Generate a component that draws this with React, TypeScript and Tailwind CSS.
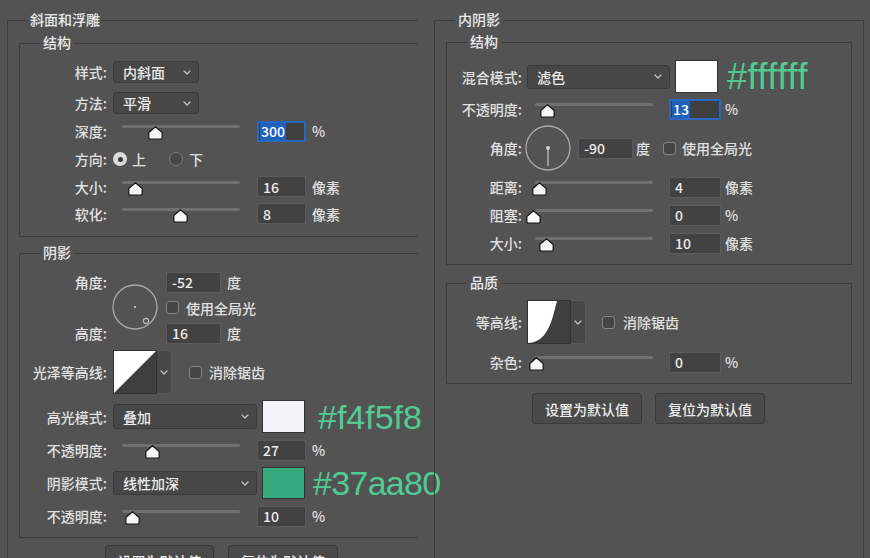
import React from "react";

function Chevron() {
  return (
    <svg width="8" height="5" viewBox="0 0 8 5" className="shrink-0">
      <path d="M1 1 L4 4 L7 1" fill="none" stroke="#c4c4c4" strokeWidth="1.2" strokeLinecap="round" strokeLinejoin="round" />
    </svg>
  );
}

function Thumb() {
  return (
    <svg width="15" height="14" viewBox="0 0 15 14">
      <path
        d="M7.5 0.8 L14.2 6.6 V11.6 Q14.2 13.2 12.6 13.2 H2.4 Q0.8 13.2 0.8 11.6 V6.6 Z"
        fill="#f7f7f7"
        stroke="#1c1c1c"
        strokeWidth="1.3"
        strokeLinejoin="round"
      />
    </svg>
  );
}

function Slider({ pos, cls }: { pos: number; cls: string }) {
  return (
    <div className={`relative h-[20px] w-[118px] shrink-0 ${cls}`}>
      <div className="absolute left-0 right-0 top-[4px] h-[3px] rounded-full bg-[#707070]" />
      <div className="absolute top-[5px] flex" style={{ left: pos - 7 }}>
        <Thumb />
      </div>
    </div>
  );
}

function Field({ value, cls, selected }: { value: string; cls: string; selected?: boolean }) {
  if (selected) {
    return (
      <div className={`flex h-[21px] shrink-0 items-center border-2 border-[#2a68bf] bg-[#3f3f3f] pl-[1px] ${cls}`}>
        <span className="bg-[#1f60bb] px-[1px] leading-[17px] text-white">{value}</span>
      </div>
    );
  }
  return (
    <div className={`flex h-[21px] shrink-0 items-center border border-[#5b5b5b] bg-[#424242] pl-[5px] text-[#ececec] ${cls}`}>
      {value}
    </div>
  );
}

function Dropdown({ text, cls }: { text: string; cls: string }) {
  return (
    <div className={`flex shrink-0 items-center justify-between rounded-[3px] border border-[#3a3a3a] bg-[#474747] pl-[9px] pr-[7px] text-[#ececec] ${cls}`}>
      <span>{text}</span>
      <Chevron />
    </div>
  );
}

function Legend({ children, cls }: { children: React.ReactNode; cls: string }) {
  return <div className={`-mt-[11px] h-[18px] w-fit bg-[#535353] px-[3px] text-[#eaeaea] ${cls}`}>{children}</div>;
}

function Label({ t, cls }: { t: string; cls: string }) {
  return <div className={`shrink-0 whitespace-nowrap text-right ${cls}`}>{t}</div>;
}

function Checkbox({ cls }: { cls: string }) {
  return <div className={`h-[13px] w-[13px] shrink-0 rounded-[3px] border-[1.5px] border-[#858585] bg-[#454545] ${cls}`} />;
}

function Contour({ kind, cls }: { kind: "linear" | "s"; cls: string }) {
  return (
    <div className={`flex shrink-0 ${cls}`}>
      <div className="h-[44px] w-[44px] border border-[#333]">
        <svg width="42" height="42" viewBox="0 0 42 42" className="block">
          <rect x="0" y="0" width="42" height="42" fill="#3f3f3f" />
          {kind === "linear" ? (
            <polygon points="0,0 42,0 0,42" fill="#ffffff" />
          ) : (
            <path d="M0 0 H29 C25 14 22 36 6 41 Q2 42 0 42 Z" fill="#ffffff" />
          )}
        </svg>
      </div>
      <div className="flex h-[44px] w-[15px] items-center justify-center rounded-r-[3px] border-y border-r border-[#5a5a5a] bg-[#474747]">
        <Chevron />
      </div>
    </div>
  );
}

function Btn({ t, cls }: { t: string; cls: string }) {
  return (
    <div className={`flex h-[31px] shrink-0 items-center justify-center rounded-[3px] border border-[#3a3a3a] bg-[#4a4a4a] text-[14px] text-[#ececec] ${cls}`}>
      {t}
    </div>
  );
}

function LeftSliderRow({ label, pos, value, unit, cls, selected }: { label: string; pos: number; value: string; unit: string; cls: string; selected?: boolean }) {
  return (
    <div className={`flex items-center ${cls}`}>
      <Label t={label} cls="w-[87px]" />
      <Slider pos={pos} cls="ml-[15px]" />
      <Field value={value} cls="ml-[17px] w-[49px]" selected={selected} />
      <span className="ml-[6px]">{unit}</span>
    </div>
  );
}

function RightSliderRow({ label, pos, value, unit, cls, selected }: { label: string; pos: number; value: string; unit: string; cls: string; selected?: boolean }) {
  return (
    <div className={`flex items-center ${cls}`}>
      <Label t={label} cls="w-[75px]" />
      <Slider pos={pos} cls="ml-[13px]" />
      <Field value={value} cls="ml-[16px] w-[52px]" selected={selected} />
      <span className="ml-[4px]">{unit}</span>
    </div>
  );
}

export default function App() {
  return (
    <div className="flex h-[558px] w-[870px] overflow-hidden bg-[#535353] font-['Noto_Sans_CJK_SC',sans-serif] text-[14px] font-medium leading-[18px] text-[#e0e0e0]">
      {/* Left panel */}
      <div className="ml-[7px] mt-[20px] w-[411px] shrink-0 border-l border-t border-[#3d3d3d]">
        <Legend cls="ml-[19px]">斜面和浮雕</Legend>

        {/* 结构 */}
        <div className="ml-[11px] mt-[15px] border-b border-l border-t border-[#3d3d3d] pb-[9px]">
          <Legend cls="ml-[20px]">结构</Legend>
          <div className="mt-[7px] flex h-[28px] items-center">
            <Label t="样式:" cls="w-[87px]" />
            <Dropdown text="内斜面" cls="ml-[6px] h-[22px] w-[86px]" />
          </div>
          <div className="mt-[3px] flex h-[28px] items-center">
            <Label t="方法:" cls="w-[87px]" />
            <Dropdown text="平滑" cls="ml-[6px] h-[22px] w-[86px]" />
          </div>
          <LeftSliderRow label="深度:" pos={33} value="300" unit="%" cls="h-[28px]" selected />
          <div className="flex h-[28px] items-center">
            <Label t="方向:" cls="w-[87px]" />
            <div className="ml-[6px] flex h-[14px] w-[14px] shrink-0 items-center justify-center rounded-full bg-[#dadada]">
              <div className="h-[5px] w-[5px] rounded-full bg-[#3a3a3a]" />
            </div>
            <span className="ml-[5px]">上</span>
            <div className="ml-[23px] h-[14px] w-[14px] shrink-0 rounded-full border border-[#7a7a7a] bg-[#474747]" />
            <span className="ml-[6px]">下</span>
          </div>
          <LeftSliderRow label="大小:" pos={13} value="16" unit="像素" cls="h-[27px]" />
          <LeftSliderRow label="软化:" pos={58} value="8" unit="像素" cls="h-[27px]" />
        </div>

        {/* 阴影 */}
        <div className="ml-[11px] mt-[16px] border-b border-l border-t border-[#3d3d3d] pb-[8px]">
          <Legend cls="ml-[20px]">阴影</Legend>
          <div className="mt-[8px] flex">
            <div className="flex w-[87px] shrink-0 flex-col">
              <div className="flex h-[26px] items-center justify-end">角度:</div>
              <div className="h-[25px]" />
              <div className="flex h-[26px] items-center justify-end">高度:</div>
            </div>
            <svg width="46" height="46" viewBox="0 0 46 46" className="ml-[5px] mt-[15px] shrink-0">
              <circle cx="23" cy="23" r="22" fill="none" stroke="#a9a9a9" strokeWidth="1.3" />
              <circle cx="23" cy="23" r="1.1" fill="#cfcfcf" />
              <circle cx="34" cy="37" r="2.6" fill="none" stroke="#bdbdbd" strokeWidth="1.1" />
            </svg>
            <div className="ml-[8px] flex flex-col">
              <div className="flex h-[26px] items-center">
                <Field value="-52" cls="w-[55px]" />
                <span className="ml-[6px]">度</span>
              </div>
              <div className="flex h-[25px] items-center">
                <Checkbox cls="" />
                <span className="ml-[7px]">使用全局光</span>
              </div>
              <div className="flex h-[26px] items-center">
                <Field value="16" cls="w-[55px]" />
                <span className="ml-[6px]">度</span>
              </div>
            </div>
          </div>
          <div className="mt-[4px] flex h-[44px] items-center">
            <Label t="光泽等高线:" cls="w-[87px]" />
            <Contour kind="linear" cls="ml-[6px]" />
            <Checkbox cls="ml-[17px]" />
            <span className="ml-[7px]">消除锯齿</span>
          </div>
          <div className="mt-[6px] flex h-[33px] items-center">
            <Label t="高光模式:" cls="w-[87px]" />
            <Dropdown text="叠加" cls="ml-[6px] h-[25px] w-[144px]" />
            <div className="ml-[5px] h-[33px] w-[43px] shrink-0 border border-[#333] bg-[#f4f5f8]" />
            <span className="ml-[13px] font-['Liberation_Sans',sans-serif] text-[34px] font-normal leading-none text-[#52ca94]">#f4f5f8</span>
          </div>
          <LeftSliderRow label="不透明度:" pos={30} value="27" unit="%" cls="mt-[4px] h-[26px]" />
          <div className="mt-[4px] flex h-[32px] items-center">
            <Label t="阴影模式:" cls="w-[87px]" />
            <Dropdown text="线性加深" cls="ml-[6px] h-[24px] w-[144px]" />
            <div className="ml-[5px] h-[32px] w-[43px] shrink-0 border border-[#333] bg-[#37aa80]" />
            <span className="ml-[8px] font-['Liberation_Sans',sans-serif] text-[34px] font-normal leading-none tracking-[-0.7px] text-[#52ca94]">#37aa80</span>
          </div>
          <LeftSliderRow label="不透明度:" pos={10} value="10" unit="%" cls="mt-[4px] h-[26px]" />
        </div>

        <div className="ml-[97px] mt-[7px] flex gap-[14px]">
          <Btn t="设置为默认值" cls="w-[109px]" />
          <Btn t="复位为默认值" cls="w-[110px]" />
        </div>
      </div>

      {/* Right panel */}
      <div className="ml-[16px] mt-[20px] w-[430px] shrink-0 border-l border-r border-t border-[#3d3d3d]">
        <Legend cls="ml-[20px]">内阴影</Legend>

        <div className="mx-[11px] mt-[14px] border border-[#3d3d3d] pb-[8px]">
          <Legend cls="ml-[20px]">结构</Legend>
          <div className="mt-[10px] flex h-[33px] items-center">
            <Label t="混合模式:" cls="w-[75px]" />
            <Dropdown text="滤色" cls="ml-[5px] h-[24px] w-[143px]" />
            <div className="ml-[5px] h-[33px] w-[43px] shrink-0 border border-[#333] bg-[#ffffff]" />
            <span className="ml-[9px] font-['Liberation_Sans',sans-serif] text-[36px] font-normal leading-none tracking-[0.6px] text-[#52ca94]">#ffffff</span>
          </div>
          <RightSliderRow label="不透明度:" pos={12} value="13" unit="%" cls="mt-[3px] h-[26px]" selected />
          <div className="mt-[3px] flex h-[46px] items-center">
            <Label t="角度:" cls="w-[75px]" />
            <svg width="46" height="46" viewBox="0 0 46 46" className="ml-[3px] shrink-0">
              <circle cx="23" cy="23" r="22" fill="none" stroke="#a9a9a9" strokeWidth="1.3" />
              <line x1="23" y1="23" x2="23" y2="41" stroke="#bdbdbd" strokeWidth="1.3" />
              <circle cx="23" cy="23" r="2" fill="#cfcfcf" />
            </svg>
            <Field value="-90" cls="ml-[7px] w-[55px]" />
            <span className="ml-[3px]">度</span>
            <Checkbox cls="ml-[13px]" />
            <span className="ml-[6px]">使用全局光</span>
          </div>
          <RightSliderRow label="距离:" pos={4} value="4" unit="像素" cls="mt-[3px] h-[26px]" />
          <RightSliderRow label="阻塞:" pos={-2} value="0" unit="%" cls="mt-[2px] h-[26px]" />
          <RightSliderRow label="大小:" pos={11} value="10" unit="像素" cls="mt-[2px] h-[26px]" />
        </div>

        <div className="mx-[11px] mt-[18px] border border-[#3d3d3d] pb-[8px]">
          <Legend cls="ml-[20px]">品质</Legend>
          <div className="mt-[9px] flex h-[44px] items-center">
            <Label t="等高线:" cls="w-[75px]" />
            <Contour kind="s" cls="ml-[5px]" />
            <Checkbox cls="ml-[16px]" />
            <span className="ml-[8px]">消除锯齿</span>
          </div>
          <RightSliderRow label="杂色:" pos={1} value="0" unit="%" cls="mt-[5px] h-[26px]" />
        </div>

        <div className="ml-[97px] mt-[9px] flex gap-[13px]">
          <Btn t="设置为默认值" cls="w-[110px]" />
          <Btn t="复位为默认值" cls="w-[110px]" />
        </div>
      </div>
    </div>
  );
}
